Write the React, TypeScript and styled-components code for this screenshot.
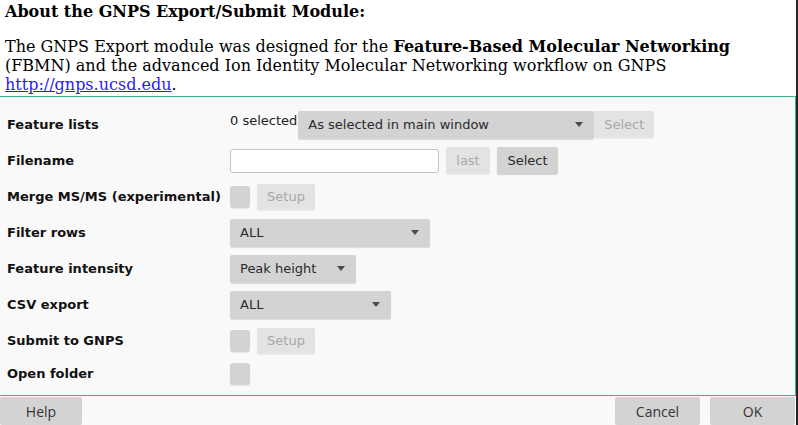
import React from 'react';
import styled, { createGlobalStyle } from 'styled-components';

const GlobalStyle = createGlobalStyle`
    html, body {
        margin: 0;
        padding: 0;
        background: #232323;
        overflow: hidden;
    }
`;

const Window = styled.div`
    width: 796px;
    height: 425px;
    overflow: hidden;
    background: #f9f9f9;
    display: flex;
    flex-direction: column;
`;

const About = styled.div`
    height: 96px;
    box-sizing: border-box;
    background: #ffffff;
    padding: 2px 60px 0 5px;
    font-family: 'DejaVu Serif', serif;
    font-size: 16px;
    line-height: 19px;
    color: #000;
`;

const AboutTitle = styled.h3`
    margin: 0 0 16px 0;
    font-size: 16px;
    font-weight: bold;
`;

const AboutText = styled.p`
    margin: 0;
`;

const Link = styled.a`
    color: #2a1aff;
    text-decoration: underline;
`;

const FormPanel = styled.div`
    height: 302px;
    box-sizing: border-box;
    border: 1px solid #36b496;
    border-left: none;
    padding: 14px 0 0 7px;
    display: grid;
    grid-template-columns: 223px 1fr;
    grid-template-rows: repeat(7, 28px) 22px;
    row-gap: 8px;
    align-items: center;
    font-family: 'DejaVu Sans', sans-serif;
    font-size: 13px;
    color: #333;
`;

const Label = styled.div`
    font-weight: bold;
    color: #111;
`;

const Controls = styled.div<{ $top?: boolean }>`
    display: flex;
    align-items: ${(p) => (p.$top ? 'flex-start' : 'center')};
    gap: 7px;
    height: 100%;
`;

const Count = styled.span`
    margin-top: 2px;
    color: #222;
`;

const ComboGroup = styled.div`
    display: flex;
    margin-left: -6px;
`;

const Combo = styled.div<{ $width: number }>`
    width: ${(p) => p.$width}px;
    height: 28px;
    box-sizing: border-box;
    background: #d3d3d3;
    border-radius: 2px;
    box-shadow: 0 1px 1px rgba(0, 0, 0, 0.12);
    display: flex;
    align-items: center;
    justify-content: space-between;
    padding: 0 11px 0 10px;
    color: #2a2a2a;
`;

const Arrow = styled.span`
    width: 0;
    height: 0;
    border-left: 4.5px solid transparent;
    border-right: 4.5px solid transparent;
    border-top: 5px solid #4a4a4a;
`;

const Button = styled.div<{ $disabled?: boolean; $width: number; $height?: number }>`
    width: ${(p) => p.$width}px;
    height: ${(p) => p.$height ?? 27}px;
    box-sizing: border-box;
    background: ${(p) => (p.$disabled ? '#e3e3e3' : '#d3d3d3')};
    color: ${(p) => (p.$disabled ? '#a8a8a8' : '#2a2a2a')};
    border-radius: 2px;
    box-shadow: ${(p) => (p.$disabled ? '0 1px 1px rgba(0,0,0,0.05)' : '0 1px 1px rgba(0,0,0,0.15)')};
    display: flex;
    align-items: center;
    justify-content: center;
`;

const TextField = styled.input`
    width: 209px;
    height: 24px;
    box-sizing: border-box;
    border: 1px solid #c4c4c4;
    border-radius: 3px;
    background: #fff;
    font: inherit;
    outline: none;
`;

const CheckBox = styled.div`
    width: 20px;
    height: 22px;
    border-radius: 3px;
    background: #d3d3d3;
    box-shadow: 0 1px 1px rgba(0, 0, 0, 0.08);
`;

const ButtonBar = styled.div`
    margin-top: 1px;
    display: flex;
    gap: 10px;
    padding-right: 1px;
    font-family: 'Open Sans', 'DejaVu Sans', sans-serif;
    font-size: 14px;
`;

const BarButton = styled.div<{ $width: number }>`
    width: ${(p) => p.$width}px;
    height: 28px;
    background: #d3d3d3;
    color: #333;
    display: flex;
    align-items: center;
    justify-content: center;
    border-radius: 2px;
`;

const Spacer = styled.div`
    flex: 1;
`;

export default function App() {
    return (
        <>
            <GlobalStyle />
            <Window>
                <About>
                    <AboutTitle>About the GNPS Export/Submit Module:</AboutTitle>
                    <AboutText>
                        The GNPS Export module was designed for the <b>Feature-Based Molecular Networking</b>{' '}
                        (FBMN) and the advanced Ion Identity Molecular Networking workflow on GNPS{' '}
                        <Link href="#">http://gnps.ucsd.edu</Link>.
                    </AboutText>
                </About>
                <FormPanel>
                    <Label>Feature lists</Label>
                    <Controls $top>
                        <Count>0 selected</Count>
                        <ComboGroup>
                            <Combo $width={296}>
                                As selected in main window
                                <Arrow />
                            </Combo>
                            <Button $disabled $width={60}>
                                Select
                            </Button>
                        </ComboGroup>
                    </Controls>

                    <Label>Filename</Label>
                    <Controls>
                        <TextField />
                        <Button $disabled $width={44}>
                            last
                        </Button>
                        <Button $width={61}>Select</Button>
                    </Controls>

                    <Label>Merge MS/MS (experimental)</Label>
                    <Controls>
                        <CheckBox />
                        <Button $disabled $width={58} $height={26}>
                            Setup
                        </Button>
                    </Controls>

                    <Label>Filter rows</Label>
                    <Controls>
                        <Combo $width={200}>
                            ALL
                            <Arrow />
                        </Combo>
                    </Controls>

                    <Label>Feature intensity</Label>
                    <Controls>
                        <Combo $width={126}>
                            Peak height
                            <Arrow />
                        </Combo>
                    </Controls>

                    <Label>CSV export</Label>
                    <Controls>
                        <Combo $width={161}>
                            ALL
                            <Arrow />
                        </Combo>
                    </Controls>

                    <Label>Submit to GNPS</Label>
                    <Controls>
                        <CheckBox />
                        <Button $disabled $width={58} $height={26}>
                            Setup
                        </Button>
                    </Controls>

                    <Label>Open folder</Label>
                    <Controls>
                        <CheckBox />
                    </Controls>
                </FormPanel>
                <ButtonBar>
                    <BarButton $width={82}>Help</BarButton>
                    <Spacer />
                    <BarButton $width={85}>Cancel</BarButton>
                    <BarButton $width={85}>OK</BarButton>
                </ButtonBar>
            </Window>
        </>
    );
}
